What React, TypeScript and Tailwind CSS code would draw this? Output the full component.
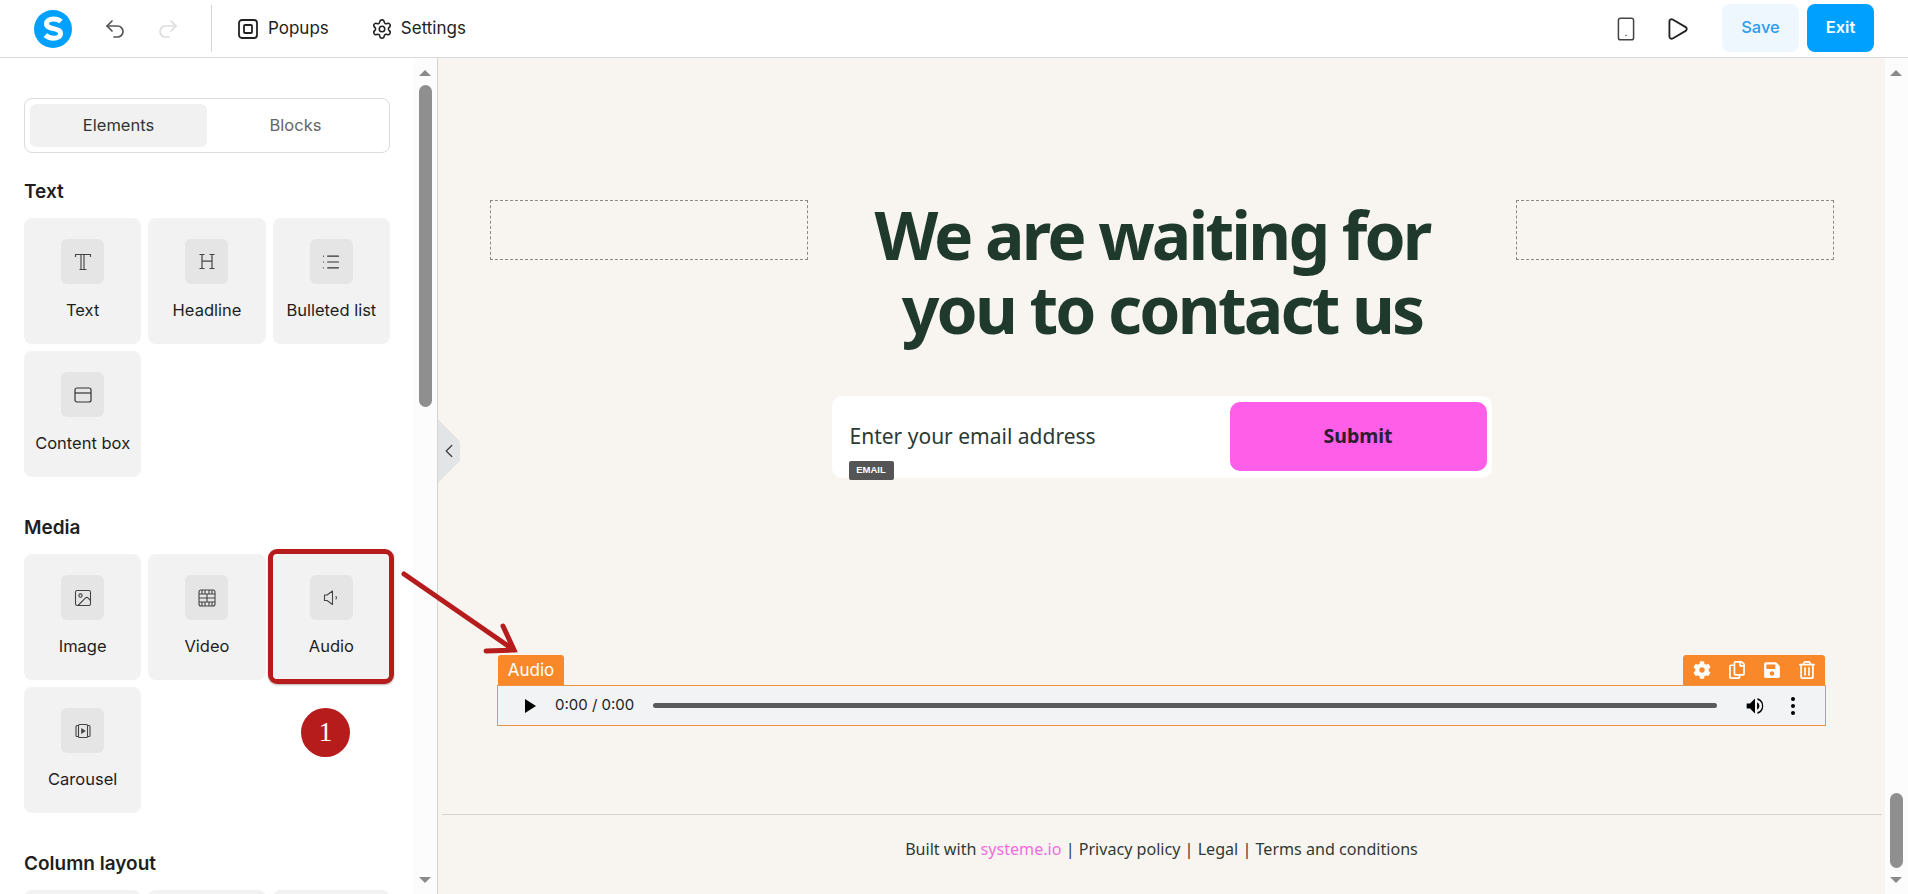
import React from "react";
import { Settings, Smartphone, Play, Image as ImageIcon, List, ChevronLeft, Undo2, Redo2 } from "lucide-react";
import { FaCog, FaRegCopy, FaSave, FaRegTrashAlt } from "react-icons/fa";

const SerifT = () => (
  <svg width="20" height="20" viewBox="0 0 20 20" fill="none" stroke="#444" strokeWidth="1.1">
    <path d="M2.500 5V2.500h15V5M8 2.500v15M11 2.500v15M6.500 17.500h7" />
  </svg>
);
const SerifH = () => (
  <svg width="20" height="20" viewBox="0 0 20 20" fill="none" stroke="#444" strokeWidth="1.2">
    <path d="M5 2.500v14M15 2.500v14M5 9.200h10M2.500 2.500h5M12.500 2.500h5M2.500 16.500h5M12.500 16.500h5" />
  </svg>
);
const Box = () => (
  <svg width="20" height="20" viewBox="0 0 20 20" fill="none" stroke="#333" strokeWidth="1.2">
    <rect x="2" y="3" width="16" height="14" rx="2" />
    <path d="M2 8h16" />
  </svg>
);
const Film = () => (
  <svg width="20" height="20" viewBox="0 0 20 20" fill="none" stroke="#444" strokeWidth="1.1">
    <rect x="2" y="2" width="16" height="16" rx="2" />
    <path d="M2 6h16M2 14h16M2 10h16M10 6v8M5 2v4M8 2v4M12 2v4M15 2v4M5 14v4M8 14v4M12 14v4M15 14v4" />
  </svg>
);
const Carousel = () => (
  <svg width="20" height="20" viewBox="0 0 20 20" fill="none" stroke="#444" strokeWidth="1.1">
    <rect x="5.500" y="3.500" width="9" height="13" rx="1" />
    <path d="M5.500 4.500H4a1 1 0 0 0-1 1v9a1 1 0 0 0 1 1h1.500M14.500 4.500H16a1 1 0 0 1 1 1v9a1 1 0 0 1-1 1h-1.500" />
    <path d="M8.800 8v4l3-2z" fill="#444" />
  </svg>
);
const Speaker = () => (
  <svg width="20" height="20" viewBox="0 0 20 20" fill="none" stroke="#444" strokeWidth="1.1" strokeLinejoin="round" strokeLinecap="round">
    <path d="M11.500 3L6 7H3.500v5.500H6l5.500 4z" />
    <path d="M15 8.500a2 2 0 0 1 0 2.500" />
  </svg>
);

type Item = { label: string; icon: React.ReactNode };

const Card = ({ label, icon }: Item) => (
  <div className="h-[126px] rounded-[8px] bg-[#f2f2f2] flex flex-col items-center pt-[21px]">
    <div className="w-[43px] h-[45px] rounded-[6px] bg-[#e5e5e5] flex items-center justify-center">{icon}</div>
    <div className="mt-[15px] text-[16.5px] leading-[22px] text-[#1e1e1e] whitespace-nowrap">{label}</div>
  </div>
);

const Group = ({ title, items }: { title: string; items: Item[] }) => (
  <section>
    <h3 className="text-[19px] leading-[24px] font-semibold text-[#1f1f1f]">{title}</h3>
    <div className="mt-[14px] grid grid-cols-3 gap-[7px]">
      {items.map((i) => (
        <Card key={i.label} {...i} />
      ))}
    </div>
  </section>
);

const Scrollbar = ({ thumbTop, thumbHeight }: { thumbTop: number; thumbHeight: number }) => (
  <div className="w-[23px] shrink-0 bg-[#fcfcfc] relative">
    <div className="absolute left-[5px] top-[12px] w-0 h-0 border-x-[6px] border-x-transparent border-b-[6px] border-b-[#8a8a8a]" />
    <div
      className="absolute left-[5px] w-[13px] rounded-full bg-[#8f8f8f]"
      style={{ top: thumbTop, height: thumbHeight }}
    />
    <div className="absolute left-[5px] bottom-[11px] w-0 h-0 border-x-[6px] border-x-transparent border-t-[6px] border-t-[#8a8a8a]" />
  </div>
);

export default function App() {
  return (
    <div className="w-[1908px] h-[894px] overflow-hidden flex flex-col bg-white font-['Inter',sans-serif] relative">
      <header className="h-[58px] shrink-0 border-b border-[#d9d9d9] flex items-center pl-[34px] pr-[34px]">
        <svg width="38" height="38" viewBox="0 0 38 38">
          <circle cx="19" cy="19" r="19" fill="#00a0ff" />
          <path d="M27 11.500c-2-1.800-4.700-2.600-7.500-2.600-4.200 0-7 2-7 5 0 6 14 3.500 14 9.500 0 3-3 4.800-7 4.800-3.200 0-6-1-8.200-3" fill="none" stroke="#fff" strokeWidth="5" />
        </svg>
        <Undo2 className="ml-[31px]" size={24} strokeWidth={1.7} color="#555" />
        <Redo2 className="ml-[29px]" size={24} strokeWidth={1.7} color="#ddd" />
        <div className="ml-[31px] w-px h-[47px] bg-[#d6d6d6]" />
        <svg className="ml-[25px]" width="22" height="22" viewBox="0 0 22 22" fill="none" stroke="#222" strokeWidth="1.8">
          <rect x="2" y="2" width="18" height="18" rx="3" />
          <rect x="7" y="7" width="8" height="8" rx="1" />
        </svg>
        <span className="ml-[9px] text-[17px] text-[#222]">Popups</span>
        <Settings className="ml-[42px]" size={22} strokeWidth={1.7} color="#222" />
        <span className="ml-[8px] text-[17px] text-[#222]">Settings</span>
        <div className="flex-1" />
        <Smartphone size={26} strokeWidth={1.4} color="#444" />
        <Play className="ml-[25px]" size={26} strokeWidth={1.7} color="#222" />
        <button className="ml-[32px] w-[77px] h-[48px] -mt-[2px] rounded-[8px] bg-[#eff7fe] text-[#2e9cf0] text-[16.5px] font-medium">Save</button>
        <button className="ml-[8px] w-[67px] h-[48px] -mt-[2px] rounded-[8px] bg-[#00a0ff] text-white text-[16.5px] font-semibold">Exit</button>
      </header>

      <div className="flex-1 flex min-h-0">
        <aside className="w-[438px] shrink-0 border-r border-[#d4d4d4] flex overflow-hidden">
          <div className="w-[414px] pl-[24px] pr-[24px] pt-[40px] shrink-0">
            <div className="h-[55px] rounded-[8px] border border-[#dcdcdc] p-[5px] flex">
              <div className="flex-1 rounded-[6px] bg-[#f1f1f1] flex items-center justify-center text-[16.5px] text-[#333]">Elements</div>
              <div className="flex-1 flex items-center justify-center text-[16.5px] text-[#666]">Blocks</div>
            </div>
            <div className="mt-[27px] flex flex-col gap-[39px]">
              <Group
                title="Text"
                items={[
                  { label: "Text", icon: <SerifT /> },
                  { label: "Headline", icon: <SerifH /> },
                  { label: "Bulleted list", icon: <List size={20} strokeWidth={1.4} color="#333" /> },
                  { label: "Content box", icon: <Box /> },
                ]}
              />
              <Group
                title="Media"
                items={[
                  { label: "Image", icon: <ImageIcon size={20} strokeWidth={1.3} color="#444" /> },
                  { label: "Video", icon: <Film /> },
                  { label: "Audio", icon: <Speaker /> },
                  { label: "Carousel", icon: <Carousel /> },
                ]}
              />
              <Group
                title="Column layout"
                items={[
                  { label: "", icon: null },
                  { label: " ", icon: null },
                  { label: "  ", icon: null },
                ]}
              />
            </div>
          </div>
          <Scrollbar thumbTop={27} thumbHeight={322} />
        </aside>

        <main className="flex-1 min-w-0 bg-[#f8f5f0] relative pt-[142px] font-['Noto_Sans',sans-serif]">
          <div className="absolute left-0 top-[361px] w-[22px] h-[64px] bg-[#e2e4e6] [clip-path:polygon(0_0,100%_35%,100%_65%,0_100%)] flex items-center">
            <ChevronLeft size={22} strokeWidth={1.5} color="#444" />
          </div>

          <div className="flex pl-[52px] pr-[51px]">
            <div className="w-[318px] h-[60px] border border-dashed border-[#8a8a8a]" />
            <h1 className="flex-1 -mt-[3px] text-center text-[66px] leading-[74px] font-bold text-[#1f3a2d] tracking-[-2.8px]">
              <span className="inline-block pr-[20px]">We are waiting for</span>
              <br />
              you to contact us
            </h1>
            <div className="w-[318px] h-[60px] border border-dashed border-[#8a8a8a]" />
          </div>

          <div className="relative mt-[51px] mx-auto w-[660px] h-[82px] rounded-[10px] bg-white flex items-center pl-[18px] pr-[5px]">
            <span className="flex-1 text-[21px] text-[#2b3a33]">Enter your email address</span>
            <button className="w-[257px] h-[69px] -mt-[2px] rounded-[10px] bg-[#ff5ee8] text-[19.5px] font-bold text-[#2a2030]">Submit</button>
            <span className="absolute left-[17px] top-[65px] w-[45px] h-[19px] rounded-[2px] bg-[#555] text-white text-[9.5px] leading-[18px] font-bold text-center font-['Liberation_Sans',sans-serif]">EMAIL</span>
          </div>

          <div className="mt-[177px] mx-[59px] font-['Inter',sans-serif]">
            <div className="flex justify-between pl-[1px] pr-[1px]">
              <div className="w-[66px] h-[30px] rounded-t-[3px] bg-[#f9882a] text-white text-[17px] leading-[30px] text-center">Audio</div>
              <div className="w-[142px] h-[30px] rounded-t-[3px] bg-[#f9882a] flex items-center justify-between pl-[10px] pr-[9px] text-white text-[18px]">
                <FaCog />
                <FaRegCopy />
                <FaSave />
                <FaRegTrashAlt />
              </div>
            </div>
            <div className="h-[41px] border border-[#f0933f] bg-[#f1f3f4] flex items-center pl-[27px] pr-[30px]">
              <div className="w-0 h-0 border-y-[7px] border-y-transparent border-l-[11px] border-l-black" />
              <span className="ml-[19px] text-[15px] text-[#222]">0:00 / 0:00</span>
              <div className="ml-[19px] flex-1 h-[5px] rounded-full bg-[#5b5b5b]" />
              <svg className="ml-[28px]" width="20" height="20" viewBox="0 0 24 24" fill="#000">
                <path d="M2 9v6h4l6 6V3L6 9z" />
                <path d="M14.500 7.500a5 5 0 0 1 0 9zM15 2.500v2.300a7.500 7.500 0 0 1 0 14.400v2.300a10 10 0 0 0 0-19z" />
              </svg>
              <div className="ml-[26px] flex flex-col gap-[3px]">
                <span className="w-[4px] h-[4px] rounded-full bg-black" />
                <span className="w-[4px] h-[4px] rounded-full bg-black" />
                <span className="w-[4px] h-[4px] rounded-full bg-black" />
              </div>
            </div>
          </div>

          <div className="mt-[88px] ml-[4px] mr-[3px] border-t border-[#d4d4cf]" />
          <p className="mt-[22px] text-center text-[16.100px] leading-[24px] text-[#2f3a35]">
            Built with <span className="text-[#f36be0]">systeme.io</span> | Privacy policy | Legal | Terms and conditions
          </p>
        </main>

        <Scrollbar thumbTop={735} thumbHeight={75} />
      </div>

      <div className="absolute left-[268px] top-[549px] w-[126px] h-[135px] border-[5px] border-[#b71c1c] rounded-[9px] pointer-events-none shadow-[0_1px_2px_rgba(0,0,0,0.3)]" />
      <div className="absolute left-[301px] top-[708px] w-[49px] h-[49px] rounded-full bg-[#b71c1c] text-white text-[27px] leading-[49px] text-center font-['Liberation_Serif',serif]">1</div>
      <svg className="absolute left-0 top-0 pointer-events-none" width="1908" height="894" fill="none" stroke="#b71c1c" strokeWidth="5" strokeLinecap="round">
        <path d="M404 574L514 650M503 626l11 24-28 1" />
      </svg>
    </div>
  );
}
